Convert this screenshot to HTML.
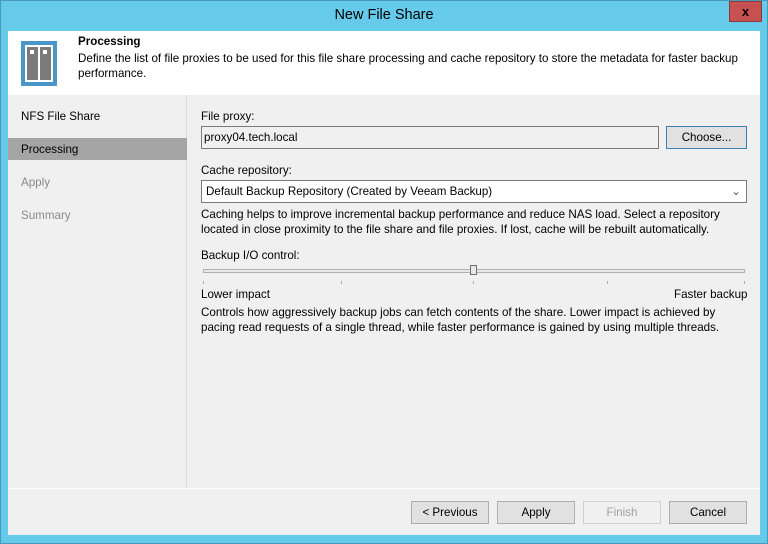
<!DOCTYPE html>
<html><head><style>
*{box-sizing:border-box;margin:0;padding:0}
body{width:768px;height:544px;background:#66cbea;font-family:"Liberation Sans",sans-serif;font-size:11.6px;color:#000;position:relative;overflow:hidden}
.frame{position:absolute;left:0;top:0;width:768px;height:544px;border:1px solid #4a9ab5}
.title{position:absolute;left:0;top:7px;width:768px;text-align:center;font-size:14.5px;color:#000}
.close{position:absolute;left:729px;top:1px;width:33px;height:21px;background:#c75050;border:1px solid #8a3a3a;color:#000;font-weight:bold;font-size:13px;text-align:center;line-height:19px}
.a{position:absolute}
.hdr{left:8px;top:31px;width:752px;height:64px;background:#fff}
.nav{left:8px;top:95px;width:179px;height:393px;background:#f0f0f0;border-right:1px solid #dcdcdc}
.main{left:187px;top:95px;width:573px;height:393px;background:#f0f0f0}
.foot{left:8px;top:488px;width:752px;height:47px;background:#f0f0f0;border-top:1px solid #fff}
.btn{position:absolute;height:23px;border:1px solid #adadad;background:#e1e1e1;text-align:center;line-height:21px}
.nav div{position:absolute;left:13px}
</style></head><body>
<div class="frame"></div>
<div class="title">New File Share</div>
<div class="close">x</div>
<div class="a hdr">
 <div class="a" style="left:13px;top:10px;width:36px;height:45px;border:4px solid #4a96c7;background:#fff">
  <div class="a" style="left:2px;top:2px;width:11px;height:33px;background:#7b7b7b"></div>
  <div class="a" style="left:15px;top:2px;width:11px;height:33px;background:#7b7b7b"></div>
  <div class="a" style="left:5px;top:5px;width:4px;height:4px;background:#fff"></div>
  <div class="a" style="left:18px;top:5px;width:4px;height:4px;background:#fff"></div>
 </div>
 <div class="a" style="left:70px;top:4px;font-weight:bold">Processing</div>
 <div class="a" style="left:70px;top:20px;width:680px;line-height:15px">Define the list of file proxies to be used for this file share processing and cache repository to store the metadata for faster backup performance.</div>
</div>
<div class="a nav">
 <div style="top:15px">NFS File Share</div>
 <div style="left:0;top:43px;width:179px;height:22px;background:#a5a5a5"></div>
 <div style="top:48px">Processing</div>
 <div style="top:81px;color:#8a8a8a">Apply</div>
 <div style="top:114px;color:#8a8a8a">Summary</div>
</div>
<div class="a main">
 <div class="a" style="left:14px;top:15px">File proxy:</div>
 <div class="a" style="left:14px;top:31px;width:458px;height:23px;border:1px solid #7a7a7a;background:#f0f0f0;padding:4px 2px">proxy04.tech.local</div>
 <div class="btn" style="left:479px;top:31px;width:81px;border-color:#3c7fb1">Choose...</div>
 <div class="a" style="left:14px;top:69px">Cache repository:</div>
 <div class="a" style="left:14px;top:85px;width:546px;height:23px;border:1px solid #7a7a7a;background:#fff;padding:4px 4px">Default Backup Repository (Created by Veeam Backup)<span style="position:absolute;right:5px;top:3px;color:#555">&#8964;</span></div>
 <div class="a" style="left:14px;top:112px;width:550px;line-height:15px">Caching helps to improve incremental backup performance and reduce NAS load. Select a repository located in close proximity to the file share and file proxies. If lost, cache will be rebuilt automatically.</div>
 <div class="a" style="left:14px;top:154px">Backup I/O control:</div>
 <div class="a" style="left:16px;top:174px;width:542px;height:4px;border:1px solid #b0b0b0;background:#e7e7e7"></div>
 <div class="a" style="left:283px;top:170px;width:7px;height:10px;border:1px solid #707070;background:#e7e7e7"></div>
 <div class="a" style="left:16px;top:186px;width:1px;height:3px;background:#aaa"></div>
 <div class="a" style="left:154px;top:186px;width:1px;height:3px;background:#aaa"></div>
 <div class="a" style="left:286px;top:186px;width:1px;height:3px;background:#aaa"></div>
 <div class="a" style="left:420px;top:186px;width:1px;height:3px;background:#aaa"></div>
 <div class="a" style="left:557px;top:186px;width:1px;height:3px;background:#aaa"></div>
 <div class="a" style="left:14px;top:193px">Lower impact</div>
 <div class="a" style="left:487px;top:193px">Faster backup</div>
 <div class="a" style="left:14px;top:210px;width:545px;line-height:15px">Controls how aggressively backup jobs can fetch contents of the share. Lower impact is achieved by pacing read requests of a single thread, while faster performance is gained by using multiple threads.</div>
</div>
<div class="a foot">
 <div class="btn" style="left:403px;top:12px;width:78px">&lt; Previous</div>
 <div class="btn" style="left:489px;top:12px;width:78px">Apply</div>
 <div class="btn" style="left:575px;top:12px;width:78px;color:#a0a0a0;border-color:#cfcfcf;background:#f0f0f0">Finish</div>
 <div class="btn" style="left:661px;top:12px;width:78px">Cancel</div>
</div>
</body></html>
